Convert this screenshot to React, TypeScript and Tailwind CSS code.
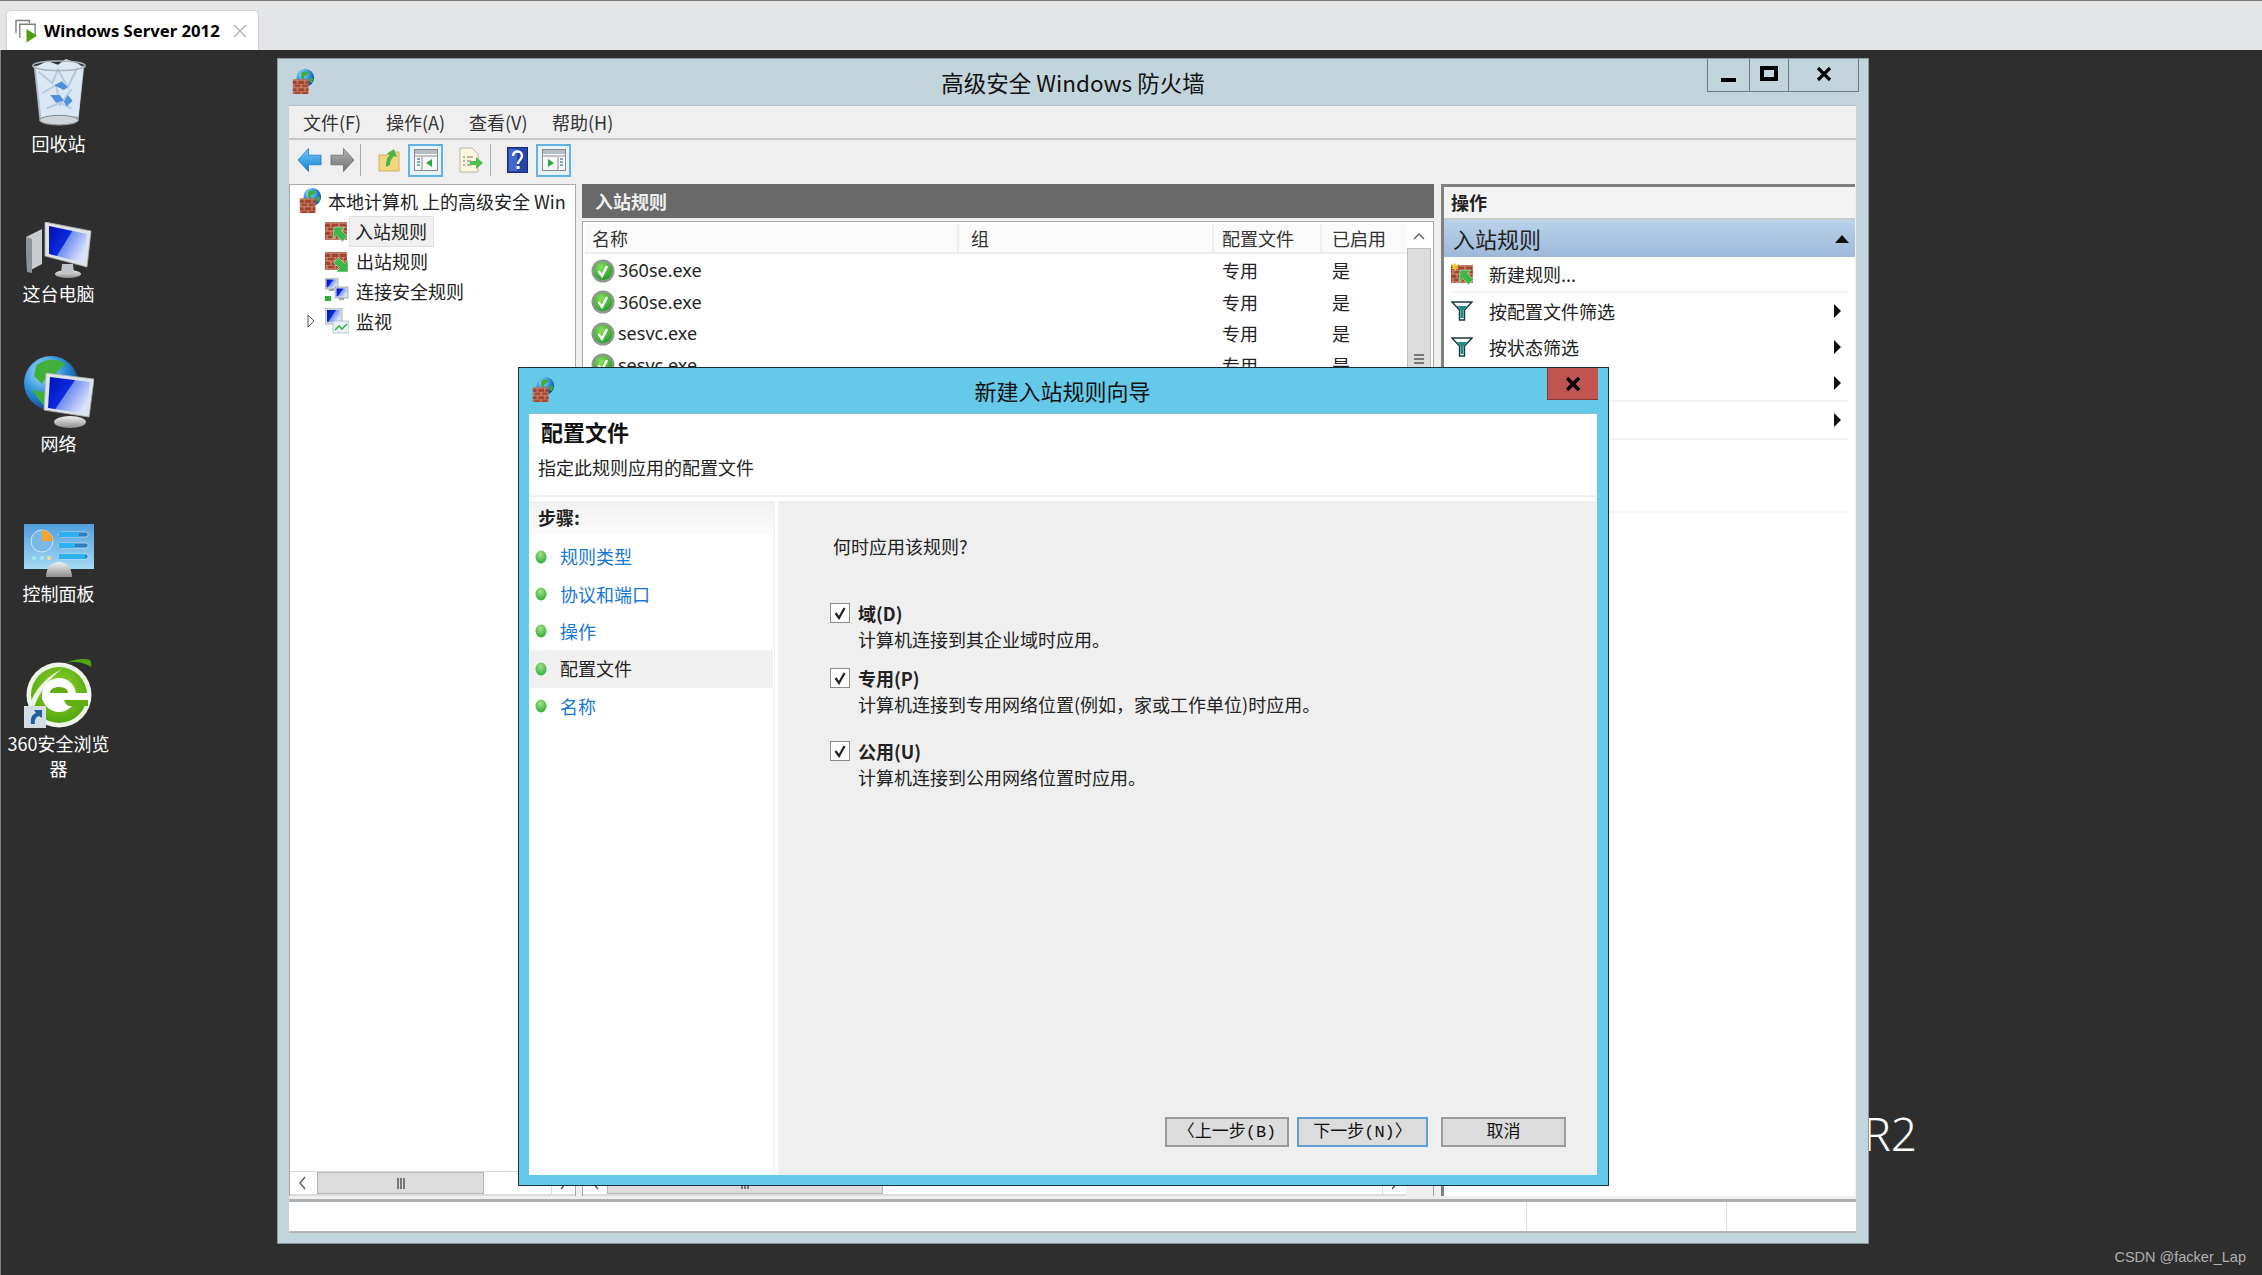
import type { ReactNode } from 'react';

// shared svg paints
function SvgDefs() {
  return (
    <svg className="absolute w-0 h-0">
      <defs>
        <pattern id="brick" width="8" height="8" patternUnits="userSpaceOnUse">
          <rect width="8" height="8" fill="#a5432f" />
          <path d="M0 0H8M0 4H8M2 0V4M6 4V8" stroke="#d9b49a" strokeWidth="0.8" />
        </pattern>
        <radialGradient id="globe" cx="35%" cy="30%" r="75%">
          <stop offset="0%" stopColor="#a8e0ff" />
          <stop offset="55%" stopColor="#2b8fd8" />
          <stop offset="100%" stopColor="#0f3f86" />
        </radialGradient>
        <linearGradient id="screen" x1="0" y1="0" x2="1" y2="0.6">
          <stop offset="0%" stopColor="#0010b0" />
          <stop offset="50%" stopColor="#0a2ce0" />
          <stop offset="52%" stopColor="#6f8ef0" />
          <stop offset="100%" stopColor="#dbe4ff" />
        </linearGradient>
        <linearGradient id="blueArrow" x1="0" y1="0" x2="0" y2="1">
          <stop offset="0%" stopColor="#6fcaf8" />
          <stop offset="100%" stopColor="#1380d8" />
        </linearGradient>
        <linearGradient id="greyArrow" x1="0" y1="0" x2="0" y2="1">
          <stop offset="0%" stopColor="#b5b5b5" />
          <stop offset="100%" stopColor="#6f6f6f" />
        </linearGradient>
        <radialGradient id="checkGreen" cx="40%" cy="30%" r="75%">
          <stop offset="0%" stopColor="#8be05c" />
          <stop offset="100%" stopColor="#1f9a25" />
        </radialGradient>
        <radialGradient id="bullet" cx="45%" cy="30%" r="70%">
          <stop offset="0%" stopColor="#a6e08a" />
          <stop offset="100%" stopColor="#2fae3a" />
        </radialGradient>
        <linearGradient id="panelBlue" x1="0" y1="0" x2="0" y2="1">
          <stop offset="0%" stopColor="#4f9fdc" />
          <stop offset="100%" stopColor="#a6d8f4" />
        </linearGradient>
        <radialGradient id="green360" cx="50%" cy="40%" r="60%">
          <stop offset="0%" stopColor="#9ad62f" />
          <stop offset="100%" stopColor="#4fa60f" />
        </radialGradient>
        <linearGradient id="dome" x1="0" y1="0" x2="0" y2="1">
          <stop offset="0%" stopColor="#f2f2f2" />
          <stop offset="100%" stopColor="#8d8d8d" />
        </linearGradient>
      </defs>
    </svg>
  );
}

function FirewallIcon({ className }: { className?: string }) {
  return (
    <svg viewBox="0 0 24 28" className={className}>
      <circle cx="14.5" cy="9.5" r="9.5" fill="url(#globe)" />
      <path d="M10 4c3-2 6-2 8 0l-2 3-3 1 1 4-4-2zM20 9l3 1-1 5-3-1z" fill="#3fae3a" />
      <rect x="1" y="11" width="17" height="16" fill="url(#brick)" />
    </svg>
  );
}

function RuleIcon({ kind }: { kind: 'in' | 'out' | 'new' }) {
  return (
    <svg viewBox="0 0 24 24" className="w-[24px] h-[24px] shrink-0">
      <rect x="0" y="3" width="22" height="18" fill="url(#brick)" />
      {kind === 'out' ? (
        <path d="M23 23H11l3.5-3.5-6-6 5-5 6 6L23 11z" fill="#3fb54a" stroke="#d6f0c8" strokeWidth="0.6" />
      ) : (
        <path d="M9 8h11l-3.5 3.5 6 6-5 5-6-6L8 20z" fill="#3fb54a" stroke="#d6f0c8" strokeWidth="0.6" />
      )}
      {kind === 'new' && <path d="M4 0l1 3 3-1-2 3 2 2-3 0-1 3-1-3-3 0 2-2-2-3 3 1z" fill="#f5c52c" />}
    </svg>
  );
}

function SmallMonitor({ x, y }: { x: number; y: number }) {
  return (
    <g transform={`translate(${x} ${y})`}>
      <rect width="13" height="11" fill="#d8dde2" stroke="#7d8790" strokeWidth="0.6" />
      <rect x="1.5" y="1.5" width="10" height="8" fill="url(#screen)" />
      <rect x="4" y="11" width="5" height="2" fill="#9aa2aa" />
    </g>
  );
}

function ConnectionIcon() {
  return (
    <svg viewBox="0 0 24 26" className="w-[24px] h-[26px] shrink-0">
      <SmallMonitor x={0} y={0} />
      <SmallMonitor x={10} y={9} />
      <rect x="0" y="18" width="6" height="5" fill="#2fae3a" />
    </svg>
  );
}

function MonitorIcon() {
  return (
    <svg viewBox="0 0 24 26" className="w-[24px] h-[26px] shrink-0">
      <rect x="0" y="0" width="17" height="16" fill="#d8dde2" stroke="#8d969e" strokeWidth="0.6" />
      <rect x="2" y="2" width="13" height="12" fill="url(#screen)" />
      <rect x="8" y="13" width="16" height="12" fill="#e8f0f6" stroke="#8fa8bb" strokeWidth="0.6" />
      <path d="M10 22l4-4 3 3 5-5" stroke="#2fae3a" strokeWidth="1.5" fill="none" />
    </svg>
  );
}

function NavArrow({ dir }: { dir: 'back' | 'forward' }) {
  return (
    <svg viewBox="0 0 26 26" className="w-[25px] h-[26px] shrink-0">
      {dir === 'back' ? (
        <path d="M1 13L12 1v7h13v10H12v7z" fill="url(#blueArrow)" stroke="#1a78c8" strokeWidth="0.8" />
      ) : (
        <path d="M25 13L14 1v7H1v10h13v7z" fill="url(#greyArrow)" stroke="#6a6a6a" strokeWidth="0.8" />
      )}
    </svg>
  );
}

function FolderUp() {
  return (
    <svg viewBox="0 0 22 24" className="w-[22px] h-[24px] shrink-0">
      <path d="M1 7h8l2-3h10v19H1z" fill="#f2d77e" stroke="#c9a848" strokeWidth="0.8" />
      <path d="M8 19c0-7 1-10 4-12L9 6l7-5 3 8-3-1c-2 2-4 5-4 9z" fill="#4bb548" />
    </svg>
  );
}

function PaneToggle({ side }: { side: 'left' | 'right' }) {
  return (
    <div className="w-[35px] h-[33px] shrink-0 border-2 border-[#62b2e4] bg-[#e6f2fa] flex items-center justify-center">
      <svg viewBox="0 0 24 22" className="w-[24px] h-[22px]">
        <rect x="0.5" y="0.5" width="23" height="21" fill="#f7f7f7" stroke="#8a8a8a" />
        <rect x="1" y="1" width="22" height="4" fill="#b4bcc4" />
        <path d="M1 7h22" stroke="#8a8a8a" />
        {side === 'left' ? (
          <>
            <path d="M8 8v13" stroke="#8a8a8a" />
            <path d="M3 10h3M3 13h3M3 16h3" stroke="#5a8ab0" strokeWidth="1.4" />
            <path d="M18 10v8l-6-4z" fill="#2fa83a" />
          </>
        ) : (
          <>
            <path d="M16 8v13" stroke="#8a8a8a" />
            <path d="M18 10h3M18 13h3M18 16h3" stroke="#5a8ab0" strokeWidth="1.4" />
            <path d="M6 10v8l6-4z" fill="#2fa83a" />
          </>
        )}
      </svg>
    </div>
  );
}

function DocExport() {
  return (
    <svg viewBox="0 0 24 26" className="w-[24px] h-[26px] shrink-0">
      <path d="M1 1h12l6 6v18H1z" fill="#fbf6dc" stroke="#a8a8a0" strokeWidth="0.8" />
      <path d="M4 10h2M8 10h6M4 14h2M8 14h4M4 18h2M8 18h4" stroke="#77776f" strokeWidth="1.2" />
      <path d="M11 14h6v-4l7 6-7 6v-4h-6z" fill="#4bc04a" />
    </svg>
  );
}

function HelpIcon() {
  return (
    <svg viewBox="0 0 21 26" className="w-[21px] h-[26px] shrink-0">
      <rect x="0.5" y="0.5" width="20" height="25" fill="#2645a8" stroke="#152a70" />
      <rect x="2" y="2" width="8" height="22" fill="#3f68d0" />
      <path d="M6 9c0-6 9-6 9 0 0 4-4 4-4 8" stroke="#fff" strokeWidth="2.4" fill="none" />
      <rect x="9.6" y="19" width="3" height="3" fill="#fff" />
    </svg>
  );
}

function CheckCircle() {
  return (
    <svg viewBox="0 0 24 24" className="w-[24px] h-[24px] shrink-0">
      <circle cx="12" cy="12" r="11.5" fill="#8a9a8a" />
      <circle cx="12" cy="12" r="9" fill="url(#checkGreen)" />
      <path d="M7.5 12l3.5 5 5-10" stroke="#fff" strokeWidth="2.4" fill="none" />
    </svg>
  );
}

function FunnelIcon() {
  return (
    <svg viewBox="0 0 22 20" className="w-[22px] h-[20px] shrink-0">
      <path d="M1 1h20l-7.5 8v10h-5V9z" fill="#f4f8f8" stroke="#173c3c" strokeWidth="1.4" />
      <path d="M6 5h10l-3.5 4v8h-3V9z" fill="#1f8a8a" />
    </svg>
  );
}

function RightCaret() {
  return (
    <svg viewBox="0 0 7 14" className="w-[7px] h-[14px] shrink-0">
      <path d="M0 0l7 7-7 7z" fill="#111" />
    </svg>
  );
}

function RecycleBin() {
  return (
    <svg viewBox="0 0 58 72" className="w-[58px] h-[70px]">
      <path d="M3 8h52l-6 56H9z" fill="#aebccb" />
      <path d="M5 9l12-6 11 4 8-6 13 5 5 4-5 50-38 3z" fill="#dbe7f3" />
      <path d="M8 14l14 12 6-14 10 18 10-20M12 36l14-8 4 20 12-16M16 52l14-6 12 6" stroke="#b3c9e0" strokeWidth="2" fill="none" />
      <path d="M24 28l8-4 6 6-4 3zM20 38l6 8 8-2-4-6zM38 38l5 6-6 6-3-5z" fill="#4f90dc" />
      <ellipse cx="29" cy="8" rx="27" ry="5" fill="none" stroke="#a9b3ba" strokeWidth="1.6" />
      <ellipse cx="29" cy="64" rx="20" ry="5" fill="#cfd4d8" stroke="#7d8489" />
    </svg>
  );
}

function ComputerIcon() {
  return (
    <svg viewBox="0 0 66 56" className="w-[66px] h-[56px]">
      <path d="M0 15l16-8v35L1 50z" fill="#c9ccd0" />
      <path d="M0 15l6 2v34l-5-1z" fill="#8d9298" />
      <path d="M19 0l46 9-4 36-42-11z" fill="#dfe3e8" stroke="#aab0b6" strokeWidth="0.8" />
      <path d="M23 4l38 8-3 29-35-9z" fill="url(#screen)" />
      <ellipse cx="42" cy="52" rx="13" ry="4" fill="url(#dome)" />
      <path d="M36 42h11l1 9H35z" fill="#bfc3c7" />
    </svg>
  );
}

function NetworkIcon() {
  return (
    <svg viewBox="0 0 70 72" className="w-[70px] h-[72px]">
      <circle cx="27" cy="27" r="27" fill="url(#globe)" />
      <path d="M12 10c8-8 22-8 30-2l-8 6-4 10-8-2-4 6-8-8zM8 34l12 2 6 12-6 2zM34 30l8 4-2 8-6-4z" fill="#3fb13a" />
      <path d="M22 17l48 6-5 38-45-7z" fill="#dfe3e8" stroke="#aab0b6" strokeWidth="0.8" transform="translate(0 0)" />
      <path d="M26 21l40 5-4 32-38-6z" fill="url(#screen)" />
      <ellipse cx="46" cy="66" rx="16" ry="6" fill="url(#dome)" />
    </svg>
  );
}

function ControlPanelIcon() {
  return (
    <svg viewBox="0 0 70 54" className="w-[70px] h-[54px]">
      <rect x="0" y="0" width="70" height="45" fill="url(#panelBlue)" />
      <circle cx="18" cy="17" r="11" fill="#7ab8e6" stroke="#cfe7f7" strokeWidth="1" />
      <path d="M18 6a11 11 0 0 1 11 11H18z" fill="#f2a531" />
      {[10, 21, 32].map((y, i) => (
        <g key={y}>
          <rect x="35" y={y - 2} width="29" height="5" rx="2" fill="#2f7fbf" stroke="#cfe7f7" strokeWidth="0.7" />
          <rect x="35" y={y - 2} width={[20, 16, 26][i]} height="5" fill="#2bb0f0" />
        </g>
      ))}
      <circle cx="10" cy="34" r="2" fill="#9ff0f0" />
      <circle cx="18" cy="34" r="2" fill="#9ff0f0" />
      <circle cx="25" cy="34" r="2" fill="#ffd98a" />
      <path d="M22 53c0-10 6-15 13-15s13 5 13 15z" fill="url(#dome)" />
    </svg>
  );
}

function Browser360Icon() {
  return (
    <div className="relative w-[66px] h-[71px]">
      <svg viewBox="0 0 66 71" className="w-[66px] h-[71px]">
        <circle cx="33" cy="38" r="32.5" fill="#eef4e8" />
        <circle cx="33" cy="38" r="28" fill="url(#green360)" />
        <path d="M40 6C48 2 58 1 64 3c1 2 2 5 1 7C58 5 48 4 40 6z" fill="#4fa60f" />
        <path d="M5 44C12 28 24 18 36 12 25 20 15 32 8 50z" fill="#eef4e8" />
        <circle cx="33" cy="38" r="17" fill="#fff" />
        <path d="M24 36c0-8 18-8 18 0z" fill="#62ad14" />
        <rect x="16" y="36" width="48" height="7" fill="#fff" />
        <path d="M38 43h24v6H44c-3 0-5-3-6-6z" fill="#62ad14" />
      </svg>
      <div className="absolute left-[-2px] bottom-[0px] w-[22px] h-[22px] bg-[#d4dde4] flex items-center justify-center">
        <svg viewBox="0 0 16 16" className="w-[16px] h-[16px]">
          <path d="M4 15C3 8 6 5 9 4L7 1h8v8l-3-2C9 8 7 11 8 15z" fill="#1f5fa8" />
        </svg>
      </div>
    </div>
  );
}

function DesktopItem({ icon, label }: { icon: ReactNode; label: ReactNode }) {
  return (
    <div className="h-[150px] w-[115px] flex flex-col items-center pt-[8px]">
      <div className="h-[70px] flex items-end justify-center">{icon}</div>
      <div className="mt-[3px] text-white text-[18px] leading-[25px] text-center">{label}</div>
    </div>
  );
}

function CapButton({ width, children }: { width: string; children: ReactNode }) {
  return <div className={`${width} h-full border-l border-[#6d7a80] flex items-center justify-center`}>{children}</div>;
}

function ScrollChevron({ dir }: { dir: 'left' | 'right' }) {
  return (
    <svg viewBox="0 0 8 14" className="w-[8px] h-[14px]">
      <path d={dir === 'left' ? 'M7 1L2 7l5 6' : 'M1 1l5 6-5 6'} stroke="#555" strokeWidth="1.3" fill="none" />
    </svg>
  );
}

function HScrollbar({ thumb, left }: { thumb: string; left: string }) {
  return (
    <div className="h-[25px] shrink-0 flex items-stretch bg-white border-t border-[#d8d8d8] border-b-2 border-b-[#dcdcdc]">
      <div className="w-[24px] flex items-center justify-center shrink-0"><ScrollChevron dir="left" /></div>
      <div className={`${left} ${thumb} bg-[#dcdcdc] border border-[#b5b5b5] flex items-center justify-center shrink-0`}>
        <div className="w-[8px] h-[11px] border-x-2 border-[#777] relative after:absolute after:left-[1px] after:w-[2px] after:h-full after:bg-[#777]" />
      </div>
      <div className="flex-1" />
      <div className="w-[24px] border-l border-[#d8d8d8] flex items-center justify-center shrink-0"><ScrollChevron dir="right" /></div>
    </div>
  );
}

const rows = [
  { name: '360se.exe', profile: '专用', enabled: '是' },
  { name: '360se.exe', profile: '专用', enabled: '是' },
  { name: 'sesvc.exe', profile: '专用', enabled: '是' },
  { name: 'sesvc.exe', profile: '专用', enabled: '是' },
];

const actions = [
  { label: '按配置文件筛选', line: false },
  { label: '按状态筛选', line: false },
];

const steps = [
  { label: '规则类型', current: false },
  { label: '协议和端口', current: false },
  { label: '操作', current: false },
  { label: '配置文件', current: true },
  { label: '名称', current: false },
];

const profiles = [
  { title: '域(D)', desc: '计算机连接到其企业域时应用。', gap: 'mt-[42px]' },
  { title: '专用(P)', desc: '计算机连接到专用网络位置(例如，家或工作单位)时应用。', gap: 'mt-[13px]' },
  { title: '公用(U)', desc: '计算机连接到公用网络位置时应用。', gap: 'mt-[21px]' },
];

function Wizard() {
  return (
    <div className="absolute left-[517px] top-[317px] w-[1091px] h-[819px] z-10 bg-[#65c9ea] border border-[#1d2d35] flex flex-col text-[18px] text-[#222]">
      <div className="h-[45px] shrink-0 relative flex items-center justify-center">
        <FirewallIcon className="absolute left-[12px] top-[9px] w-[24px] h-[26px]" />
        <span className="text-[22px] text-[#111] -ml-[2px]">新建入站规则向导</span>
        <div className="absolute right-[10px] top-0 w-[51px] h-[32px] bg-[#c0544e] border-b border-l border-[#8a3a36] flex items-center justify-center">
          <svg viewBox="0 0 16 14" className="w-[16px] h-[14px]">
            <path d="M2 1l12 12M14 1L2 13" stroke="#000" strokeWidth="3.4" />
          </svg>
        </div>
      </div>
      <div className="flex-1 ml-[10px] mr-[11px] mb-[10px] bg-white flex flex-col min-h-0 border-t border-[#8fb8c8]">
        <div className="h-[83px] shrink-0 border-b-2 border-[#f0f0f0] px-[9px] flex flex-col">
          <div className="mt-[3px] ml-[3px] text-[22px] leading-[28px] font-bold text-[#111]">配置文件</div>
          <div className="mt-[10px] leading-[24px] text-[#222]">指定此规则应用的配置文件</div>
        </div>
        <div className="flex-1 flex pt-[4px] min-h-0">
          <div className="w-[246px] shrink-0 border-r border-[#f0f0f0]">
            <div className="h-[33px] pl-[9px] flex items-center bg-gradient-to-b from-[#f1f1f1] to-[#fbfbfb] font-bold text-[#222]">步骤:</div>
            <div className="pt-[4px]">
              {steps.map((s) => (
                <div key={s.label} className={`h-[37.4px] w-[244px] pl-[6px] flex items-center ${s.current ? 'bg-[#f0f0f0]' : ''}`}>
                  <svg viewBox="0 0 12 14" className="w-[12px] h-[14px] shrink-0">
                    <ellipse cx="6" cy="7" rx="5.5" ry="6.5" fill="url(#bullet)" />
                  </svg>
                  <span className={`ml-[13px] ${s.current ? 'text-[#222]' : 'text-[#1777d6]'}`}>{s.label}</span>
                </div>
              ))}
            </div>
          </div>
          <div className="flex-1 ml-[3px] bg-[#efefef] pl-[52px] pr-[31px] flex flex-col">
            <div className="mt-[33px] ml-[3px] leading-[24px]">何时应用该规则?</div>
            {profiles.map((p) => (
              <div key={p.title} className={p.gap}>
                <div className="flex items-center h-[26px]">
                  <div className="w-[20px] h-[20px] shrink-0 bg-white border border-[#8c8c8c] flex items-center justify-center">
                    <svg viewBox="0 0 14 14" className="w-[14px] h-[14px]">
                      <path d="M2.5 7l3.5 5 5.5-10" stroke="#222" strokeWidth="2.2" fill="none" />
                    </svg>
                  </div>
                  <span className="ml-[8px] font-bold text-[#222]">{p.title}</span>
                </div>
                <div className="ml-[28px] leading-[26px]">{p.desc}</div>
              </div>
            ))}
            <div className="mt-auto mb-[28px] flex justify-end text-[17px] font-['Liberation_Mono','Noto_Sans_CJK_SC',monospace] text-[#111]">
              <div className="w-[124px] h-[30px] bg-[#dcdcdc] border-2 border-[#9a9a9a] flex items-center justify-center pt-[2px]">〈上一步(B)</div>
              <div className="ml-[8px] w-[131px] h-[30px] bg-[#dcdcdc] border-2 border-[#5f9fd6] flex items-center justify-center pt-[2px]">下一步(N)〉</div>
              <div className="ml-[13px] w-[125px] h-[30px] bg-[#dcdcdc] border-2 border-[#9a9a9a] flex items-center justify-center pt-[2px]">取消</div>
            </div>
          </div>
        </div>
      </div>
    </div>
  );
}

function FirewallWindow() {
  return (
    <div className="absolute left-[276px] top-[8px] w-[1592px] h-[1186px] bg-[#c3d5dc] border border-[#8b979d] flex flex-col text-[18px] text-[#222]">
      <div className="h-[46px] shrink-0 grid grid-cols-[1fr_auto_1fr]">
        <div className="pl-[13px] pt-[10px]">
          <FirewallIcon className="w-[24px] h-[26px]" />
        </div>
        <div className="text-[22.5px] leading-[46px] text-[#111]">高级安全 Windows 防火墙</div>
        <div className="flex justify-end pr-[9px]">
          <div className="flex h-[33px] border-r border-b border-[#6d7a80]">
            <CapButton width="w-[42px]">
              <div className="w-[15px] h-[4px] bg-black mt-[10px]" />
            </CapButton>
            <CapButton width="w-[39px]">
              <div className="w-[18px] h-[15px] border-[4px] border-black -mt-[3px]" />
            </CapButton>
            <CapButton width="w-[70px]">
              <svg viewBox="0 0 16 14" className="w-[16px] h-[14px] -mt-[3px]">
                <path d="M2 1l12 12M14 1L2 13" stroke="#000" strokeWidth="3.2" />
              </svg>
            </CapButton>
          </div>
        </div>
      </div>
      <div className="flex-1 ml-[11px] mr-[12px] bg-[#efefef] flex flex-col min-h-0 border-t border-[#b4bfc4]">
        <div className="h-[34px] shrink-0 pl-[14px] flex items-center border-b-2 border-[#c8c8c8] text-[#333]">
          {['文件(F)', '操作(A)', '查看(V)', '帮助(H)'].map((m) => (
            <div key={m} className="w-[83px]">{m}</div>
          ))}
        </div>
        <div className="h-[44px] shrink-0 flex items-center pl-[8px] pb-[4px]">
          <NavArrow dir="back" />
          <div className="ml-[8px]"><NavArrow dir="forward" /></div>
          <div className="ml-[5px] w-px h-[32px] bg-[#aaa]" />
          <div className="ml-[17px]"><FolderUp /></div>
          <div className="ml-[8px]"><PaneToggle side="left" /></div>
          <div className="ml-[16px]"><DocExport /></div>
          <div className="ml-[7px] w-px h-[32px] bg-[#aaa]" />
          <div className="ml-[16px]"><HelpIcon /></div>
          <div className="ml-[8px]"><PaneToggle side="right" /></div>
        </div>

        <div className="h-[1015px] shrink-0 flex pb-[3px]">
          {/* console tree */}
          <div className="w-[287px] shrink-0 bg-white border border-[#a8a8a8] border-b-0 flex flex-col">
            <div className="flex-1 min-h-0 pt-[1px]">
              <div className="h-[30px] pl-[8px] flex items-center gap-[6px] whitespace-nowrap overflow-hidden">
                <FirewallIcon className="w-[24px] h-[26px] shrink-0" />
                <span>本地计算机 上的高级安全 Win</span>
              </div>
              <div className="h-[30px] pl-[35px] flex items-center">
                <RuleIcon kind="in" />
                <span className="ml-[1px] pl-[5px] pr-[6px] h-[29px] flex items-center bg-[#f0f0f0] outline outline-1 outline-[#e0e0e0]">入站规则</span>
              </div>
              <div className="h-[30px] pl-[35px] flex items-center gap-[7px]">
                <RuleIcon kind="out" />
                <span>出站规则</span>
              </div>
              <div className="h-[30px] pl-[35px] flex items-center gap-[7px]">
                <ConnectionIcon />
                <span>连接安全规则</span>
              </div>
              <div className="h-[30px] pl-[17px] flex items-center">
                <svg viewBox="0 0 8 14" className="w-[8px] h-[14px] shrink-0">
                  <path d="M1 1l6 6-6 6z" fill="#fff" stroke="#555" />
                </svg>
                <div className="ml-[10px]"><MonitorIcon /></div>
                <span className="ml-[7px]">监视</span>
              </div>
            </div>
            <HScrollbar left="ml-[3px]" thumb="w-[167px]" />
          </div>

          {/* rule list */}
          <div className="w-[852px] shrink-0 ml-[6px] flex flex-col">
            <div className="h-[34px] shrink-0 bg-[#696969] pl-[13px] flex items-center text-[#eee] font-bold">入站规则</div>
            <div className="flex-1 min-h-0 mt-[3px] bg-white border border-[#a8a8a8] border-b-0 flex flex-col">
              <div className="flex-1 min-h-0 flex p-[2px] pb-0">
                <div className="flex-1 min-w-0">
                  <div className="h-[30px] grid grid-cols-[374px_255px_108px_1fr] bg-[#fafafa] border-b-2 border-[#eee] text-[#333]">
                    <div className="pl-[7px] leading-[29px] border-r-2 border-[#eee]">名称</div>
                    <div className="pl-[12px] leading-[29px] border-r-2 border-[#eee]">组</div>
                    <div className="pl-[8px] leading-[29px] border-r-2 border-[#eee]">配置文件</div>
                    <div className="pl-[10px] leading-[29px]">已启用</div>
                  </div>
                  <div className="pt-[1px]">
                    {rows.map((r, i) => (
                      <div key={i} className="h-[31.5px] grid grid-cols-[374px_255px_108px_1fr] items-center">
                        <div className="pl-[6px] flex items-center gap-[3px] font-['Noto_Sans','Noto_Sans_CJK_SC',sans-serif]">
                          <CheckCircle />
                          <span>{r.name}</span>
                        </div>
                        <div />
                        <div className="pl-[8px]">{r.profile}</div>
                        <div className="pl-[10px]">{r.enabled}</div>
                      </div>
                    ))}
                  </div>
                </div>
                <div className="w-[24px] shrink-0 flex flex-col">
                  <div className="h-[24px] flex items-center justify-center">
                    <svg viewBox="0 0 12 8" className="w-[12px] h-[8px]">
                      <path d="M1 7l5-5 5 5" stroke="#666" strokeWidth="1.5" fill="none" />
                    </svg>
                  </div>
                  <div className="flex-1 bg-[#dcdcdc] border border-[#c0c0c0] pt-[105px] flex flex-col items-center gap-[2px]">
                    <div className="w-[10px] h-[2px] bg-[#777]" />
                    <div className="w-[10px] h-[2px] bg-[#777]" />
                    <div className="w-[10px] h-[2px] bg-[#777]" />
                  </div>
                </div>
              </div>
              <div className="flex">
                <div className="flex-1 min-w-0">
                  <HScrollbar left="ml-0" thumb="w-[276px]" />
                </div>
                <div className="w-[27px] bg-[#efefef]" />
              </div>
            </div>
          </div>

          {/* actions pane */}
          <div className="w-[414px] shrink-0 ml-[7px] bg-white border-l-[3px] border-t-[3px] border-[#808080] flex flex-col">
            <div className="h-[33px] shrink-0 pl-[7px] flex items-center bg-[#f3f3f3] border-b-2 border-[#c9c9c9] font-bold text-[#222]">操作</div>
            <div className="h-[37px] shrink-0 pl-[9px] pr-[6px] flex items-center justify-between bg-gradient-to-b from-[#bad2ea] to-[#9db9d8] text-[22px] text-[#222]">
              <span>入站规则</span>
              <svg viewBox="0 0 14 8" className="w-[14px] h-[8px]">
                <path d="M0 8l7-8 7 8z" fill="#111" />
              </svg>
            </div>
            <div className="mx-[7px]">
              <div className="h-[36px] flex items-center border-b-2 border-[#f2f2f2]">
                <RuleIcon kind="new" />
                <span className="ml-[14px]">新建规则...</span>
              </div>
              {actions.map((a) => (
                <div key={a.label} className="h-[36px] flex items-center">
                  <FunnelIcon />
                  <span className="ml-[16px] flex-1">{a.label}</span>
                  <RightCaret />
                  <span className="w-[7px]" />
                </div>
              ))}
              <div className="h-[37px] flex items-center justify-end border-b-2 border-[#f2f2f2]">
                <RightCaret />
                <span className="w-[7px]" />
              </div>
              <div className="h-[38px] flex items-center justify-end border-b-2 border-[#f2f2f2]">
                <RightCaret />
                <span className="w-[7px]" />
              </div>
              <div className="h-[73px] border-b-2 border-[#f2f2f2]" />
            </div>
          </div>
        </div>

        <div className="flex-1 min-h-0 flex border-t-[3px] border-[#adb0b3] border-b-2 border-b-[#b5b5b5] bg-white">
          <div className="flex-1" />
          <div className="w-[200px] border-l border-[#ddd]" />
          <div className="w-[130px] border-l border-[#ddd]" />
        </div>
      </div>
      <div className="h-[10px] shrink-0" />
    </div>
  );
}

export default function App() {
  return (
    <div className="w-[2262px] h-[1275px] overflow-hidden border-t border-[#777] font-['Noto_Sans_CJK_SC','Noto_Sans',sans-serif]">
      <SvgDefs />
      <div className="h-[49px] bg-[#e4e5e7] flex items-end pl-[6px]">
        <div className="w-[253px] h-[40px] bg-white rounded-t-[5px] border-x border-t border-[#d0d2d5] flex items-center pl-[8px]">
          <svg viewBox="0 0 24 24" className="w-[23px] h-[24px] shrink-0">
            <path d="M1 14V1h14v3" fill="none" stroke="#7d7d7d" strokeWidth="1.4" />
            <path d="M5 19V5h16v12" fill="none" stroke="#7d7d7d" strokeWidth="1.4" />
            <path d="M12 10l11 7-11 7z" fill="#4f9e12" />
          </svg>
          <span className="ml-[6px] font-['Noto_Sans',sans-serif] font-bold text-[16.7px] text-black whitespace-nowrap">Windows Server 2012</span>
          <svg viewBox="0 0 14 14" className="ml-[13px] w-[14px] h-[14px] shrink-0">
            <path d="M1 1l12 12M13 1L1 13" stroke="#aaa" strokeWidth="1.2" />
          </svg>
        </div>
      </div>
      <div className="relative h-[1225px] bg-[#2e2e2e] border-l border-[#7d8287]">
        <div className="w-[115px]">
          <DesktopItem icon={<RecycleBin />} label="回收站" />
          <DesktopItem icon={<ComputerIcon />} label="这台电脑" />
          <DesktopItem icon={<NetworkIcon />} label="网络" />
          <DesktopItem icon={<ControlPanelIcon />} label="控制面板" />
          <DesktopItem icon={<Browser360Icon />} label={<>360安全浏览<br />器</>} />
        </div>
        <div className="absolute right-[345px] top-[1055px] text-[46px] leading-[56px] font-['Noto_Sans',sans-serif] font-light text-white">R2</div>
        <FirewallWindow />
        <Wizard />
        <div className="absolute right-[16px] bottom-[8px] text-[14.5px] leading-[20px] font-['Liberation_Sans',sans-serif] text-[#b0b0b0]">CSDN @facker_Lap</div>
      </div>
    </div>
  );
}
